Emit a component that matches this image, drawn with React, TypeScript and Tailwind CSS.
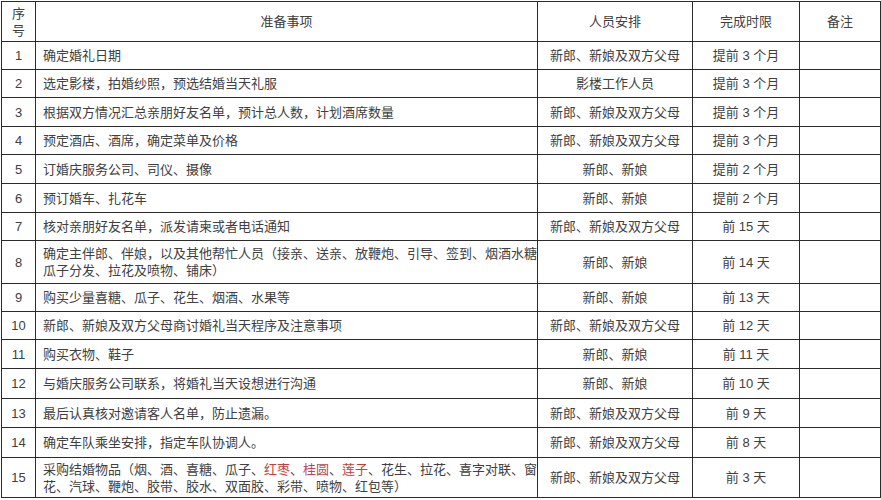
import type { ReactNode } from 'react';

type Row = {
  no: string;
  task: ReactNode;
  who: string;
  when: string;
  h: string;
};

const red = 'text-[#c0413b]';

const rows: Row[] = [
  { no: '1', task: '确定婚礼日期', who: '新郎、新娘及双方父母', when: '提前 3 个月', h: 'h-[28px]' },
  { no: '2', task: '选定影楼，拍婚纱照，预选结婚当天礼服', who: '影楼工作人员', when: '提前 3 个月', h: 'h-[28px]' },
  { no: '3', task: '根据双方情况汇总亲朋好友名单，预计总人数，计划酒席数量', who: '新郎、新娘及双方父母', when: '提前 3 个月', h: 'h-[29px]' },
  { no: '4', task: '预定酒店、酒席，确定菜单及价格', who: '新郎、新娘及双方父母', when: '提前 3 个月', h: 'h-[28px]' },
  { no: '5', task: '订婚庆服务公司、司仪、摄像', who: '新郎、新娘', when: '提前 2 个月', h: 'h-[29px]' },
  { no: '6', task: '预订婚车、扎花车', who: '新郎、新娘', when: '提前 2 个月', h: 'h-[29px]' },
  { no: '7', task: '核对亲朋好友名单，派发请柬或者电话通知', who: '新郎、新娘及双方父母', when: '前 15 天', h: 'h-[28px]' },
  {
    no: '8',
    task: (
      <>
        确定主伴郎、伴娘，以及其他帮忙人员（接亲、送亲、放鞭炮、引导、签到、烟酒水糖
        <br />
        瓜子分发、拉花及喷物、铺床）
      </>
    ),
    who: '新郎、新娘',
    when: '前 14 天',
    h: 'h-[43px]',
  },
  { no: '9', task: '购买少量喜糖、瓜子、花生、烟酒、水果等', who: '新郎、新娘', when: '前 13 天', h: 'h-[28px]' },
  { no: '10', task: '新郎、新娘及双方父母商讨婚礼当天程序及注意事项', who: '新郎、新娘及双方父母', when: '前 12 天', h: 'h-[28px]' },
  { no: '11', task: '购买衣物、鞋子', who: '新郎、新娘', when: '前 11 天', h: 'h-[29px]' },
  { no: '12', task: '与婚庆服务公司联系，将婚礼当天设想进行沟通', who: '新郎、新娘', when: '前 10 天', h: 'h-[30px]' },
  { no: '13', task: '最后认真核对邀请客人名单，防止遗漏。', who: '新郎、新娘及双方父母', when: '前 9 天', h: 'h-[29px]' },
  { no: '14', task: '确定车队乘坐安排，指定车队协调人。', who: '新郎、新娘及双方父母', when: '前 8 天', h: 'h-[30px]' },
  {
    no: '15',
    task: (
      <>
        采购结婚物品（烟、酒、喜糖、瓜子、<span className={red}>红枣</span>、
        <span className="text-[#b8485a]">桂圆</span>、<span className={red}>莲子</span>
        、花生、拉花、喜字对联、窗
        <br />
        花、汽球、鞭炮、胶带、胶水、双面胶、彩带、喷物、红包等）
      </>
    ),
    who: '新郎、新娘及双方父母',
    when: '前 3 天',
    h: 'h-[40px]',
  },
];

const cell = 'border border-[#2b2b2b] p-0 align-middle';

export default function App() {
  return (
    <div className="w-[881px] h-[500px] bg-white overflow-hidden pl-[1px] pt-[1px] font-['Liberation_Sans','Noto_Sans_CJK_SC',sans-serif] text-[13px] leading-[17px] text-[#404040]">
      <table className="border-collapse table-fixed w-[879px]">
        <colgroup>
          <col className="w-[34px]" />
          <col className="w-[502px]" />
          <col className="w-[155px]" />
          <col className="w-[107px]" />
          <col className="w-[81px]" />
        </colgroup>
        <thead>
          <tr className="h-[40px]">
            <th className={`${cell} font-normal text-center leading-[17px]`}>
              序<br />号
            </th>
            <th className={`${cell} font-normal text-center`}>准备事项</th>
            <th className={`${cell} font-normal text-center`}>人员安排</th>
            <th className={`${cell} font-normal text-center`}>完成时限</th>
            <th className={`${cell} font-normal text-center`}>备注</th>
          </tr>
        </thead>
        <tbody>
          {rows.map((r) => (
            <tr key={r.no} className={r.h}>
              <td className={`${cell} text-center`}>{r.no}</td>
              <td className={`${cell} pl-[7px] whitespace-nowrap`}>{r.task}</td>
              <td className={`${cell} text-center whitespace-nowrap`}>{r.who}</td>
              <td className={`${cell} text-center whitespace-nowrap`}>{r.when}</td>
              <td className={cell}></td>
            </tr>
          ))}
        </tbody>
      </table>
    </div>
  );
}
